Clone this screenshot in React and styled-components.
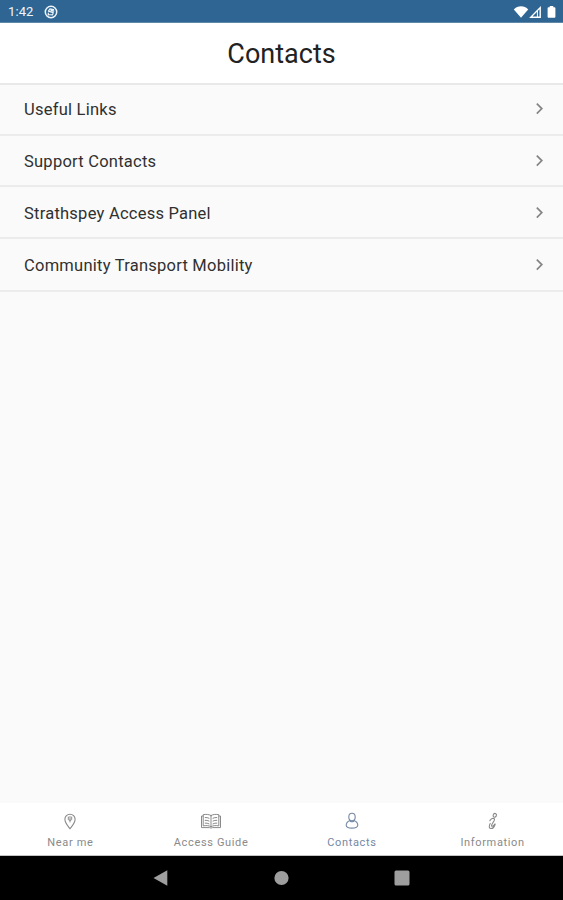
import React from "react";
import styled, { createGlobalStyle } from "styled-components";

const GlobalStyle = createGlobalStyle`
  * { box-sizing: border-box; }
  body { margin: 0; background: #fafafa; font-family: Roboto, sans-serif; }
`;

const Screen = styled.div`
  display: flex;
  flex-direction: column;
  height: 900px;
  width: 563px;
  overflow: hidden;
  background: #fafafa;
`;

const StatusBar = styled.div`
  display: flex;
  align-items: center;
  flex: none;
  height: 23px;
  padding: 1px 7px 0 8px;
  background: #2e6593;
  border-bottom: 1px solid #6088a9;
  color: #eef5fb;
`;

const Clock = styled.span`
  width: 35.5px;
  font-size: 13px;
  line-height: 22px;
  letter-spacing: 0.1px;
`;

const StatusIcons = styled.div`
  display: flex;
  margin-left: auto;
`;

const Header = styled.header`
  display: flex;
  align-items: center;
  justify-content: center;
  flex: none;
  height: 62px;
  padding-top: 2px;
  background: #fff;
  border-bottom: 2px solid #e9e9e9;
`;

const Title = styled.h1`
  margin: 0;
  font-size: 27px;
  font-weight: 400;
  line-height: 32px;
  color: #222;
`;

const List = styled.main`
  flex: 1;
`;

const Row = styled.div`
  display: flex;
  align-items: center;
  justify-content: space-between;
  height: ${(p) => p.$height}px;
  padding: ${(p) => p.$top}px 17px 0 24px;
  border-bottom: 2px solid #ececec;
`;

const RowLabel = styled.span`
  font-size: 16.5px;
  line-height: 22px;
  letter-spacing: 0.24px;
  color: #303030;
`;

const Tabs = styled.nav`
  display: grid;
  grid-template-columns: repeat(4, 1fr);
  flex: none;
  height: 53px;
  background: #fff;
  border-bottom: 1px solid #c4c4c4;
`;

const Tab = styled.div`
  display: flex;
  flex-direction: column;
  align-items: center;
  padding-top: 9px;
  color: ${(p) => (p.$active ? "#7488a5" : "#8a8a8a")};
`;

const TabLabel = styled.span`
  margin-top: 4px;
  font-size: 11px;
  line-height: 14px;
  letter-spacing: 0.65px;
`;

const SystemNav = styled.div`
  display: flex;
  align-items: center;
  justify-content: space-between;
  flex: none;
  height: 44px;
  padding: 0 152px 0 151px;
  background: #000;
`;

const stroke = { fill: "none", stroke: "currentColor", strokeLinecap: "round", strokeLinejoin: "round" };

const AppBadge = () => (
  <svg width="14" height="14" viewBox="0 0 14 14" {...stroke}>
    <circle cx="7" cy="7" r="5.7" strokeWidth="1.5" />
    <path d="M9.6 4.7 6 3.8 4.4 6.2l4.8 1.4-.7 2.3-3.8-.4M4.3 8v2M7 5.4l2.8.8" strokeWidth="1.2" />
  </svg>
);

const SignalIcons = () => (
  <svg width="43" height="16" viewBox="0 0 43 16" fill="#fff">
    <path d="M.8 5.4C4.6 1.1 11.5 1.1 15.2 5.4L8 13.8Z" />
    <path d="M17.8 13.2 27.2 3.6V13.2Z" fill="none" stroke="#fff" strokeWidth="1.4" />
    <path d="M24.4 6.4V13" stroke="#fff" strokeWidth="1" />
    <path d="M36.7 2h3.6v1.3h1.2q.9 0 .9.9v8.6q0 .9-.9.9h-6q-.9 0-.9-.9V4.2q0-.9.9-.9h1.2Z" />
  </svg>
);

const Chevron = () => (
  <svg width="14" height="16" viewBox="0 0 14 16" {...stroke} stroke="#858585">
    <path d="m4.8 1.6 5 5-5 5" strokeWidth="1.7" strokeLinecap="butt" strokeLinejoin="miter" />
  </svg>
);

const PinIcon = () => (
  <svg width="22" height="20" viewBox="0 0 22 20" {...stroke}>
    <path d="M11 16.8C9.5 14.6 5.9 11.300 5.900 7.300a5.100 5.100 0 0 1 10.200 0c0 4-3.600 7.300-5.100 9.500Z" strokeWidth="1.1" />
    <path d="M11 4.500v5.500M9.300 5v2.600q1.700 1.800 3.400 0V5" strokeWidth="1" />
  </svg>
);

const BookIcon = () => (
  <svg width="22" height="20" viewBox="0 0 22 20" {...stroke}>
    <path d="M11 3.500C8.800 2.200 5.800 2.200 3.200 2.700v11.200c2.600-.5 5.600-.5 7.800.8 2.200-1.300 5.200-1.300 7.800-.8V2.700C16.200 2.200 13.200 2.200 11 3.500Z" strokeWidth="1" />
    <path d="M11 3.500v11.200M3.200 4H1.500v11.600h8q1.500 1 3 0h8V4h-1.700" strokeWidth="1" />
    <path d="M5.200 5.500q2-.2 3.800.7M5.200 8.300q2-.2 3.800.7M5.200 11.100q2-.2 3.800.7M16.800 5.500q-2-.2-3.800.7M16.800 8.300q-2-.2-3.800.7M16.800 11.100q-2-.2-3.800.7" strokeWidth="1" />
  </svg>
);

const PersonIcon = () => (
  <svg width="22" height="20" viewBox="0 0 22 20" {...stroke} strokeWidth="1.1">
    <ellipse cx="11" cy="5" rx="3.200" ry="3.800" />
    <path d="M8.900 8.400C6.500 9.300 5.300 11 5.200 13.200c0 3.900 11.600 3.900 11.600 0-.1-2.200-1.300-3.900-3.700-4.800M9.300 9.300q1.700 1 3.400 0" />
  </svg>
);

const InfoIcon = () => (
  <svg width="22" height="20" viewBox="0 0 22 20" {...stroke} strokeWidth="1.1">
    <ellipse cx="12.800" cy="3.300" rx="1.600" ry="1.900" transform="rotate(30 12.800 3.300)" />
    <path d="M7.800 8.700c1.400-2.200 3.300-2.800 4.500-2 .9.700-.2 2.200-1.600 4.300-1.200 1.900-1.700 3.300-.5 3.300 1 0 1.900-1.100 2.600-2.200M8.200 11.400c-1.400 2.600-1.300 4.900.5 5.100 2 .2 3.800-1.800 4.500-4.500" />
  </svg>
);

const BackIcon = () => (
  <svg width="18" height="18" viewBox="0 0 18 18"><path d="M2.500 9 16.300 1.300v15.500Z" fill="#9e9e9e" /></svg>
);
const HomeIcon = () => (
  <svg width="18" height="18" viewBox="0 0 18 18"><circle cx="9.500" cy="9" r="7.100" fill="#9e9e9e" /></svg>
);
const RecentIcon = () => (
  <svg width="18" height="18" viewBox="0 0 18 18"><rect x="1.500" y="1.500" width="15" height="15" rx="1.500" fill="#9e9e9e" /></svg>
);

const rows = [
  { label: "Useful Links", height: 51, top: 1 },
  { label: "Support Contacts", height: 51, top: 3 },
  { label: "Strathspey Access Panel", height: 52, top: 4 },
  { label: "Community Transport Mobility", height: 53, top: 3 },
];

const tabs = [
  { label: "Near me", Icon: PinIcon },
  { label: "Access Guide", Icon: BookIcon },
  { label: "Contacts", Icon: PersonIcon, active: true },
  { label: "Information", Icon: InfoIcon },
];

export default function App() {
  return (
    <>
      <GlobalStyle />
      <Screen>
        <StatusBar>
          <Clock>1:42</Clock>
          <AppBadge />
          <StatusIcons><SignalIcons /></StatusIcons>
        </StatusBar>
        <Header><Title>Contacts</Title></Header>
        <List>
          {rows.map(({ label, height, top }) => (
            <Row key={label} $height={height} $top={top}>
              <RowLabel>{label}</RowLabel>
              <Chevron />
            </Row>
          ))}
        </List>
        <Tabs>
          {tabs.map(({ label, Icon, active }) => (
            <Tab key={label} $active={active}>
              <Icon />
              <TabLabel>{label}</TabLabel>
            </Tab>
          ))}
        </Tabs>
        <SystemNav>
          <BackIcon />
          <HomeIcon />
          <RecentIcon />
        </SystemNav>
      </Screen>
    </>
  );
}
